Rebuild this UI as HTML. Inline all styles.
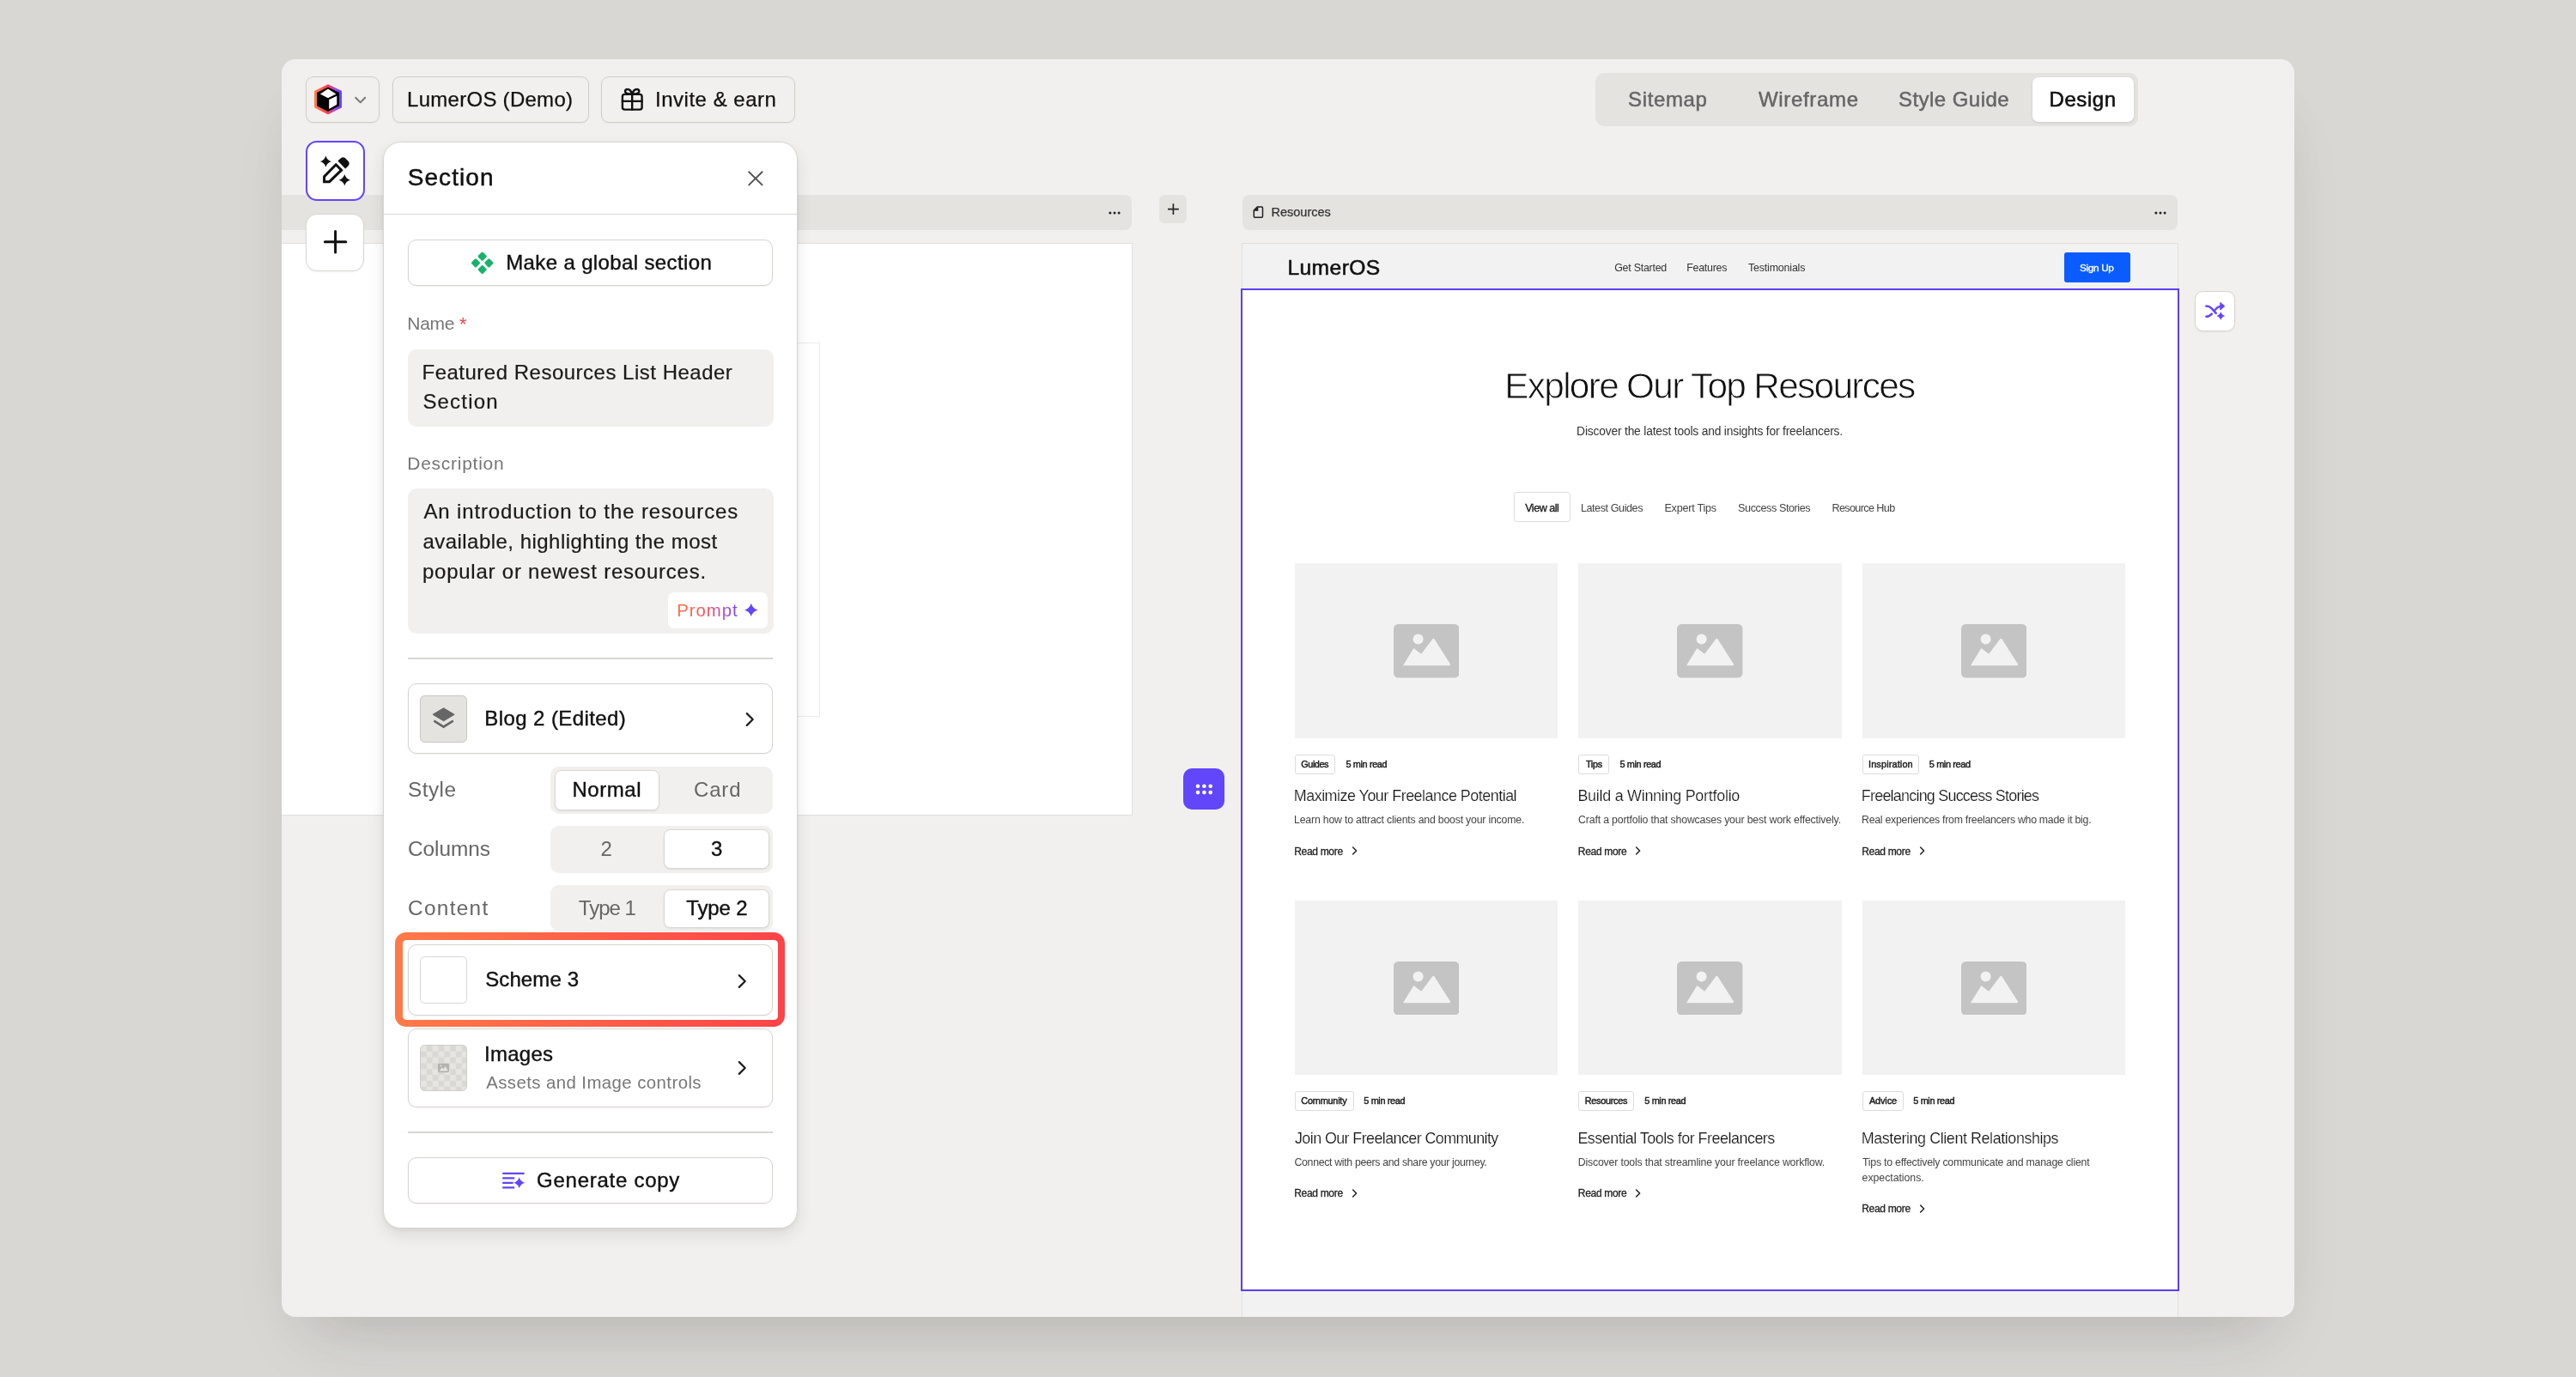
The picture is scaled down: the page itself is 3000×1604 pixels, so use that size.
<!DOCTYPE html>
<html lang="en">
<head>
<meta charset="utf-8">
<title>Section settings</title>
<style>
*{box-sizing:border-box;margin:0;padding:0}
html,body{width:3000px;height:1604px;overflow:hidden}
body{background:#d8d7d4;font-family:"Liberation Sans",sans-serif;color:#111;position:relative}
.abs{position:absolute}
.t{position:absolute;white-space:pre;line-height:1}
#shadow{position:absolute;left:328px;top:69px;width:2344px;height:1465px;border-radius:16px;background:#f1f0ee;box-shadow:0 50px 90px -34px rgba(55,50,45,.11),0 30px 60px -30px rgba(30,25,20,.12)}
#clip{will-change:transform;position:absolute;left:0;top:0;width:3000px;height:1604px;clip-path:inset(69px 328px 70px 328px round 16px)}
.btn{position:absolute;border:1px solid #cfcdc8;border-radius:9px;background:#f1f0ee;box-shadow:0 1px 2px rgba(0,0,0,.05)}
.bar{position:absolute;background:#e4e3e0}
.tag{position:absolute;border:1px solid #dcdcdc;border-radius:3px;background:#fff}
.img{position:absolute;background:#f2f2f2}
.row{position:absolute;background:#fff;border:1px solid #d5d3cf;border-radius:10px;box-shadow:0 1px 2px rgba(0,0,0,.05)}
.fld{position:absolute;background:#f1f0ee;border-radius:10px}
.seg{position:absolute;background:#f1f0ee;border-radius:10px}
.sel{position:absolute;background:#fff;border:1px solid #d9d7d3;border-radius:7.5px;box-shadow:0 1px 2px rgba(0,0,0,.08)}
.hr{position:absolute;height:1.5px;background:#d9d7d4}
</style>
</head>
<body>
<div id="shadow"></div>
<div id="clip">
<div class="btn" style="left:356px;top:89px;width:86px;height:54px;"></div>
<svg class="abs" style="left:364px;top:97px;" width="36" height="38" viewBox="364 97 36 38"><defs><linearGradient id="lg" x1="0" y1="0" x2="1" y2="0"><stop offset="0" stop-color="#ff7d45"/><stop offset=".48" stop-color="#ff3b4e"/><stop offset=".78" stop-color="#a24bd8"/><stop offset="1" stop-color="#6344ff"/></linearGradient></defs>
<path d="M382.05 99.9 396.5 106.9v17.5L382.05 131.7 367.6 124.4v-17.5z" fill="#000" stroke="url(#lg)" stroke-width="3.1" stroke-linejoin="round"/>
<path d="M382 103.6 391.4 109.5 382 114.3 372.9 109.5z" fill="#fff"/><path d="M383.2 116.1 392.3 111.7v10L383.2 127z" fill="#fff"/></svg>
<svg class="abs" style="left:410px;top:110px;" width="20" height="14" viewBox="410 110 20 14"><path d="M414.2 113.8 419.7 119.4 425.2 113.8" fill="none" stroke="#777" stroke-width="2" stroke-linecap="round" stroke-linejoin="round"/></svg>
<div class="btn" style="left:456.5px;top:89px;width:229px;height:54px;"></div>
<div class="t" style="left:474px;top:104px;font-size:24px;letter-spacing:0.28px;-webkit-text-stroke:0.25px #111;">LumerOS (Demo)</div>
<div class="btn" style="left:700px;top:89px;width:225.5px;height:54px;"></div>
<svg class="abs" style="left:720px;top:100px;" width="32" height="32" viewBox="720 100 32 32"><g fill="none" stroke="#111" stroke-width="2.4" stroke-linejoin="round" stroke-linecap="round"><rect x="724.9" y="109.9" width="22.7" height="17.7" rx="2.6"/><path d="M736.2 109.9v17.7M724.9 117.9h22.7"/><path d="M736.2 109.6c-1.2-3.6-3-5.6-5.2-5.6-1.8 0-3 1.2-3 2.6 0 2 2.6 3 8.2 3zM736.2 109.6c1.2-3.6 3-5.6 5.2-5.6 1.8 0 3 1.2 3 2.6 0 2-2.6 3-8.2 3z"/></g></svg>
<div class="t" style="left:763.1px;top:104px;font-size:24px;letter-spacing:0.5px;-webkit-text-stroke:0.25px #111;">Invite &amp; earn</div>
<div class="abs" style="left:1858px;top:85px;width:632px;height:62px;background:#e4e3e0;border-radius:10px"></div>
<div class="abs" style="left:2367px;top:90px;width:118px;height:52px;background:#fff;border-radius:7px;box-shadow:0 1px 3px rgba(0,0,0,.12)"></div>
<div class="t" style="left:1896px;top:104px;font-size:24px;color:#666;letter-spacing:0.65px;-webkit-text-stroke:0.5px #666;">Sitemap</div>
<div class="t" style="left:2047.9px;top:104px;font-size:24px;color:#666;letter-spacing:0.69px;-webkit-text-stroke:0.5px #666;">Wireframe</div>
<div class="t" style="left:2211px;top:104px;font-size:24px;color:#666;letter-spacing:0.45px;-webkit-text-stroke:0.5px #666;">Style Guide</div>
<div class="t" style="left:2386.6px;top:104px;font-size:24px;letter-spacing:0.54px;-webkit-text-stroke:0.6px #111;">Design</div>
<div class="bar" style="left:300px;top:227px;width:1018px;height:41px;border-radius:0 8px 8px 0"></div>
<svg class="abs" style="left:1290px;top:244.6px;" width="16" height="6" viewBox="-8 -3 16 6"><circle cx="-5.1" cy="0" r="1.5" fill="#222"/><circle cx="0" cy="0" r="1.5" fill="#222"/><circle cx="5.1" cy="0" r="1.5" fill="#222"/></svg>
<div class="abs" style="left:300px;top:282.75px;width:1018.75px;height:666.75px;background:#fff;border:1px solid #e1e0de"></div>
<div class="abs" style="left:700px;top:398.5px;width:255px;height:436px;border:1px solid #ebebeb;background:#fff"></div>
<div class="bar" style="left:1350.25px;top:227.25px;width:32px;height:32.5px;border-radius:6px"></div>
<svg class="abs" style="left:1358px;top:235px;" width="17" height="17" viewBox="1358 235 17 17"><path d="M1366.4 237.2v12.8M1360 243.6h12.8" stroke="#222" stroke-width="1.6" fill="none"/></svg>
<div class="bar" style="left:1447px;top:227px;width:1089px;height:41px;border-radius:8px"></div>
<svg class="abs" style="left:1457px;top:238px;" width="17" height="18" viewBox="1457 238 17 18"><path d="M1464.2 241h5.1a1.2 1.2 0 0 1 1.2 1.2v9.8a1.2 1.2 0 0 1-1.2 1.2h-7.8a1.2 1.2 0 0 1-1.2-1.2v-7z" fill="none" stroke="#222" stroke-width="1.5" stroke-linejoin="round"/><path d="M1465.3 240.3v5.4h-5.6z" fill="#222"/></svg>
<div class="t" style="left:1480.5px;top:240px;font-size:14.5px;color:#333;-webkit-text-stroke:0.25px #333;">Resources</div>
<svg class="abs" style="left:2507.5px;top:244.6px;" width="16" height="6" viewBox="-8 -3 16 6"><circle cx="-5.1" cy="0" r="1.5" fill="#222"/><circle cx="0" cy="0" r="1.5" fill="#222"/><circle cx="5.1" cy="0" r="1.5" fill="#222"/></svg>
<div class="abs" style="left:1446px;top:282.75px;width:1091px;height:1277.25px;background:#f2f2f2;border:1px solid #dfdfdf"></div>
<div class="t" style="left:1499.4px;top:300px;font-size:24.6px;letter-spacing:0.43px;-webkit-text-stroke:0.55px #111;">LumerOS</div>
<div class="t" style="left:1880.2px;top:306px;font-size:12.4px;color:#333;letter-spacing:-0.23px;">Get Started</div>
<div class="t" style="left:1964.2px;top:306px;font-size:12.4px;color:#333;letter-spacing:-0.24px;">Features</div>
<div class="t" style="left:2036px;top:306px;font-size:12.4px;color:#333;letter-spacing:-0.16px;">Testimonials</div>
<div class="abs" style="left:2403.5px;top:294px;width:77.5px;height:34.5px;background:#0b5cff;border-radius:3px"></div>
<div class="t" style="left:2422.1px;top:307px;font-size:11.8px;color:#fff;letter-spacing:-0.37px;-webkit-text-stroke:0.3px #fff;">Sign Up</div>
<div class="abs" style="left:1445.2px;top:335.7px;width:1092.8px;height:1167.9px;background:#fff;border:2.2px solid #5b3ef7"></div>
<div class="t" style="left:1752.2px;top:429px;font-size:42.4px;letter-spacing:-1.7px;-webkit-text-stroke:0.8px #fff;">Explore Our Top Resources</div>
<div class="t" style="left:1836.1px;top:496px;font-size:13.8px;color:#333;letter-spacing:-0.18px;">Discover the latest tools and insights for freelancers.</div>
<div class="tag" style="left:1762.5px;top:572.5px;width:66px;height:35px;border-radius:3.5px"></div>
<div class="t" style="left:1776.2px;top:586px;font-size:12.6px;color:#222;letter-spacing:-0.51px;-webkit-text-stroke:0.35px #222;">View all</div>
<div class="t" style="left:1840.9px;top:586px;font-size:12.6px;color:#444;letter-spacing:-0.43px;">Latest Guides</div>
<div class="t" style="left:1938.4px;top:586px;font-size:12.6px;color:#444;letter-spacing:-0.23px;">Expert Tips</div>
<div class="t" style="left:2024.1px;top:586px;font-size:12.6px;color:#444;letter-spacing:-0.41px;">Success Stories</div>
<div class="t" style="left:2133.4px;top:586px;font-size:12.6px;color:#444;letter-spacing:-0.61px;">Resource Hub</div>
<div class="img" style="left:1507.6px;top:655.75px;width:306.4px;height:204.25px;"></div>
<svg class="abs" style="left:1622.6px;top:727.08px;" width="76.4" height="62.6" viewBox="0 0 76.4 62.6"><rect x="0" y="0" width="76.4" height="62.6" rx="5.4" fill="#c4c4c4"/><circle cx="28.6" cy="17.6" r="6" fill="#f2f2f2"/><path d="M11 48.2 22.6 29.2a1.4 1.4 0 0 1 2.3 0L32.2 34.8 45.2 17.6a1.4 1.4 0 0 1 2.3 0L66 46.4a1.2 1.2 0 0 1-1 1.8z" fill="#f2f2f2"/></svg>
<div class="tag" style="left:1507.6px;top:878.5px;width:47.9px;height:23px;"></div>
<div class="t" style="left:1515.3px;top:885px;font-size:10.9px;color:#1c1c1c;letter-spacing:-0.46px;-webkit-text-stroke:0.45px #1c1c1c;">Guides</div>
<div class="t" style="left:1567.4px;top:885px;font-size:10.9px;color:#1c1c1c;letter-spacing:-0.36px;-webkit-text-stroke:0.45px #1c1c1c;">5 min read</div>
<div class="t" style="left:1506.8px;top:919px;font-size:17.9px;color:#161616;letter-spacing:-0.49px;-webkit-text-stroke:0.18px #fff;">Maximize Your Freelance Potential</div>
<div class="t" style="left:1507.1px;top:949px;font-size:12.3px;color:#444;letter-spacing:-0.2px;">Learn how to attract clients and boost your income.</div>
<div class="t" style="left:1507.2px;top:986px;font-size:12px;color:#222;letter-spacing:-0.31px;-webkit-text-stroke:0.3px #222;">Read more</div>
<svg class="abs" style="left:1572.8px;top:985.35px;" width="10" height="12" viewBox="-2 -6 10 12"><path d="M0.6 -4 4.6 0 0.6 4" fill="none" stroke="#222" stroke-width="1.5" stroke-linecap="round" stroke-linejoin="round"/></svg>
<div class="img" style="left:1838.2px;top:655.75px;width:306.4px;height:204.25px;"></div>
<svg class="abs" style="left:1953.2px;top:727.08px;" width="76.4" height="62.6" viewBox="0 0 76.4 62.6"><rect x="0" y="0" width="76.4" height="62.6" rx="5.4" fill="#c4c4c4"/><circle cx="28.6" cy="17.6" r="6" fill="#f2f2f2"/><path d="M11 48.2 22.6 29.2a1.4 1.4 0 0 1 2.3 0L32.2 34.8 45.2 17.6a1.4 1.4 0 0 1 2.3 0L66 46.4a1.2 1.2 0 0 1-1 1.8z" fill="#f2f2f2"/></svg>
<div class="tag" style="left:1838.2px;top:878.5px;width:36.3px;height:23px;"></div>
<div class="t" style="left:1846.9px;top:885px;font-size:10.9px;color:#1c1c1c;letter-spacing:-0.33px;-webkit-text-stroke:0.45px #1c1c1c;">Tips</div>
<div class="t" style="left:1886.4px;top:885px;font-size:10.9px;color:#1c1c1c;letter-spacing:-0.36px;-webkit-text-stroke:0.45px #1c1c1c;">5 min read</div>
<div class="t" style="left:1837.4px;top:919px;font-size:17.9px;color:#161616;letter-spacing:-0.25px;-webkit-text-stroke:0.18px #fff;">Build a Winning Portfolio</div>
<div class="t" style="left:1838.1px;top:949px;font-size:12.3px;color:#444;letter-spacing:-0.17px;">Craft a portfolio that showcases your best work effectively.</div>
<div class="t" style="left:1837.8px;top:986px;font-size:12px;color:#222;letter-spacing:-0.31px;-webkit-text-stroke:0.3px #222;">Read more</div>
<svg class="abs" style="left:1903.4px;top:985.35px;" width="10" height="12" viewBox="-2 -6 10 12"><path d="M0.6 -4 4.6 0 0.6 4" fill="none" stroke="#222" stroke-width="1.5" stroke-linecap="round" stroke-linejoin="round"/></svg>
<div class="img" style="left:2168.6px;top:655.75px;width:306.4px;height:204.25px;"></div>
<svg class="abs" style="left:2283.6px;top:727.08px;" width="76.4" height="62.6" viewBox="0 0 76.4 62.6"><rect x="0" y="0" width="76.4" height="62.6" rx="5.4" fill="#c4c4c4"/><circle cx="28.6" cy="17.6" r="6" fill="#f2f2f2"/><path d="M11 48.2 22.6 29.2a1.4 1.4 0 0 1 2.3 0L32.2 34.8 45.2 17.6a1.4 1.4 0 0 1 2.3 0L66 46.4a1.2 1.2 0 0 1-1 1.8z" fill="#f2f2f2"/></svg>
<div class="tag" style="left:2168.6px;top:878.5px;width:66.9px;height:23px;"></div>
<div class="t" style="left:2176px;top:885px;font-size:10.9px;color:#1c1c1c;letter-spacing:0.14px;-webkit-text-stroke:0.45px #1c1c1c;">Inspiration</div>
<div class="t" style="left:2246.8px;top:885px;font-size:10.9px;color:#1c1c1c;letter-spacing:-0.36px;-webkit-text-stroke:0.45px #1c1c1c;">5 min read</div>
<div class="t" style="left:2167.8px;top:919px;font-size:17.9px;color:#161616;letter-spacing:-0.75px;-webkit-text-stroke:0.18px #fff;">Freelancing Success Stories</div>
<div class="t" style="left:2168.1px;top:949px;font-size:12.3px;color:#444;letter-spacing:-0.26px;">Real experiences from freelancers who made it big.</div>
<div class="t" style="left:2168.2px;top:986px;font-size:12px;color:#222;letter-spacing:-0.31px;-webkit-text-stroke:0.3px #222;">Read more</div>
<svg class="abs" style="left:2233.8px;top:985.35px;" width="10" height="12" viewBox="-2 -6 10 12"><path d="M0.6 -4 4.6 0 0.6 4" fill="none" stroke="#222" stroke-width="1.5" stroke-linecap="round" stroke-linejoin="round"/></svg>
<div class="img" style="left:1507.6px;top:1048.6px;width:306.4px;height:203.7px;"></div>
<svg class="abs" style="left:1622.6px;top:1119.65px;" width="76.4" height="62.6" viewBox="0 0 76.4 62.6"><rect x="0" y="0" width="76.4" height="62.6" rx="5.4" fill="#c4c4c4"/><circle cx="28.6" cy="17.6" r="6" fill="#f2f2f2"/><path d="M11 48.2 22.6 29.2a1.4 1.4 0 0 1 2.3 0L32.2 34.8 45.2 17.6a1.4 1.4 0 0 1 2.3 0L66 46.4a1.2 1.2 0 0 1-1 1.8z" fill="#f2f2f2"/></svg>
<div class="tag" style="left:1507.6px;top:1271px;width:69.4px;height:22.6px;"></div>
<div class="t" style="left:1515.3px;top:1277px;font-size:10.9px;color:#1c1c1c;letter-spacing:-0.22px;-webkit-text-stroke:0.45px #1c1c1c;">Community</div>
<div class="t" style="left:1588.3px;top:1277px;font-size:10.9px;color:#1c1c1c;letter-spacing:-0.36px;-webkit-text-stroke:0.45px #1c1c1c;">5 min read</div>
<div class="t" style="left:1508px;top:1318px;font-size:17.9px;color:#161616;letter-spacing:-0.58px;-webkit-text-stroke:0.18px #fff;">Join Our Freelancer Community</div>
<div class="t" style="left:1507.5px;top:1348px;font-size:12.3px;color:#444;letter-spacing:-0.31px;">Connect with peers and share your journey.</div>
<div class="t" style="left:1507.2px;top:1384px;font-size:12px;color:#222;letter-spacing:-0.31px;-webkit-text-stroke:0.3px #222;">Read more</div>
<svg class="abs" style="left:1572.8px;top:1383.85px;" width="10" height="12" viewBox="-2 -6 10 12"><path d="M0.6 -4 4.6 0 0.6 4" fill="none" stroke="#222" stroke-width="1.5" stroke-linecap="round" stroke-linejoin="round"/></svg>
<div class="img" style="left:1838.2px;top:1048.6px;width:306.4px;height:203.7px;"></div>
<svg class="abs" style="left:1953.2px;top:1119.65px;" width="76.4" height="62.6" viewBox="0 0 76.4 62.6"><rect x="0" y="0" width="76.4" height="62.6" rx="5.4" fill="#c4c4c4"/><circle cx="28.6" cy="17.6" r="6" fill="#f2f2f2"/><path d="M11 48.2 22.6 29.2a1.4 1.4 0 0 1 2.3 0L32.2 34.8 45.2 17.6a1.4 1.4 0 0 1 2.3 0L66 46.4a1.2 1.2 0 0 1-1 1.8z" fill="#f2f2f2"/></svg>
<div class="tag" style="left:1838.2px;top:1271px;width:65.3px;height:22.6px;"></div>
<div class="t" style="left:1845.8px;top:1277px;font-size:10.9px;color:#1c1c1c;letter-spacing:-0.3px;-webkit-text-stroke:0.45px #1c1c1c;">Resources</div>
<div class="t" style="left:1915.3px;top:1277px;font-size:10.9px;color:#1c1c1c;letter-spacing:-0.36px;-webkit-text-stroke:0.45px #1c1c1c;">5 min read</div>
<div class="t" style="left:1837.4px;top:1318px;font-size:17.9px;color:#161616;letter-spacing:-0.48px;-webkit-text-stroke:0.18px #fff;">Essential Tools for Freelancers</div>
<div class="t" style="left:1837.7px;top:1348px;font-size:12.3px;color:#444;letter-spacing:-0.17px;">Discover tools that streamline your freelance workflow.</div>
<div class="t" style="left:1837.8px;top:1384px;font-size:12px;color:#222;letter-spacing:-0.31px;-webkit-text-stroke:0.3px #222;">Read more</div>
<svg class="abs" style="left:1903.4px;top:1383.85px;" width="10" height="12" viewBox="-2 -6 10 12"><path d="M0.6 -4 4.6 0 0.6 4" fill="none" stroke="#222" stroke-width="1.5" stroke-linecap="round" stroke-linejoin="round"/></svg>
<div class="img" style="left:2168.6px;top:1048.6px;width:306.4px;height:203.7px;"></div>
<svg class="abs" style="left:2283.6px;top:1119.65px;" width="76.4" height="62.6" viewBox="0 0 76.4 62.6"><rect x="0" y="0" width="76.4" height="62.6" rx="5.4" fill="#c4c4c4"/><circle cx="28.6" cy="17.6" r="6" fill="#f2f2f2"/><path d="M11 48.2 22.6 29.2a1.4 1.4 0 0 1 2.3 0L32.2 34.8 45.2 17.6a1.4 1.4 0 0 1 2.3 0L66 46.4a1.2 1.2 0 0 1-1 1.8z" fill="#f2f2f2"/></svg>
<div class="tag" style="left:2168.6px;top:1271px;width:48.4px;height:22.6px;"></div>
<div class="t" style="left:2177px;top:1277px;font-size:10.9px;color:#1c1c1c;letter-spacing:-0.14px;-webkit-text-stroke:0.45px #1c1c1c;">Advice</div>
<div class="t" style="left:2228.3px;top:1277px;font-size:10.9px;color:#1c1c1c;letter-spacing:-0.36px;-webkit-text-stroke:0.45px #1c1c1c;">5 min read</div>
<div class="t" style="left:2167.8px;top:1318px;font-size:17.9px;color:#161616;letter-spacing:-0.41px;-webkit-text-stroke:0.18px #fff;">Mastering Client Relationships</div>
<div class="t" style="left:2168.9px;top:1348px;font-size:12.3px;color:#444;letter-spacing:-0.21px;">Tips to effectively communicate and manage client</div>
<div class="t" style="left:2168.6px;top:1366px;font-size:12.3px;color:#444;letter-spacing:-0.03px;">expectations.</div>
<div class="t" style="left:2168.2px;top:1402px;font-size:12px;color:#222;letter-spacing:-0.31px;-webkit-text-stroke:0.3px #222;">Read more</div>
<svg class="abs" style="left:2233.8px;top:1401.85px;" width="10" height="12" viewBox="-2 -6 10 12"><path d="M0.6 -4 4.6 0 0.6 4" fill="none" stroke="#222" stroke-width="1.5" stroke-linecap="round" stroke-linejoin="round"/></svg>
<div class="abs" style="left:356px;top:164px;width:69px;height:69.75px;background:#fff;border:2.8px solid #6246fa;border-radius:13px"></div>
<svg class="abs" style="left:370px;top:178px;" width="42" height="42" viewBox="370 178 42 42"><g fill="#111"><path d="M379.40 181.50Q380.85 186.65 386.00 188.10Q380.85 189.55 379.40 194.70Q377.95 189.55 372.80 188.10Q377.95 186.65 379.40 181.50Z"/><path d="M401.30 203.10Q402.75 208.25 407.90 209.70Q402.75 211.15 401.30 216.30Q399.85 211.15 394.70 209.70Q399.85 208.25 401.30 203.10Z"/></g><path d="M391.2 191.8 397.6 198.2 383.6 211.7H377.6V205.6Z" fill="none" stroke="#111" stroke-width="3" stroke-linejoin="miter"/><path d="M393.4 187.6 396.6 184.6a4.2 4.2 0 0 1 5.8 0l3 3a4.2 4.2 0 0 1 0 5.8l-3.2 3.2z" fill="#111"/></svg>
<div class="abs" style="left:356.4px;top:248.5px;width:68px;height:67.2px;background:#fff;border:1px solid #d8d6d2;border-radius:13px;box-shadow:0 1px 2px rgba(0,0,0,.05)"></div>
<svg class="abs" style="left:374px;top:265px;" width="34" height="34" viewBox="374 265 34 34"><path d="M390.6 269.5v24.4M378.4 281.7h24.4" stroke="#111" stroke-width="3" stroke-linecap="round" fill="none"/></svg>
<div class="abs" style="left:2556px;top:338.6px;width:47.3px;height:47.3px;background:#fff;border:1px solid #d6d5d2;border-radius:9.5px;box-shadow:0 1px 2px rgba(0,0,0,.06)"></div>
<svg class="abs" style="left:2564px;top:348px;" width="32" height="28" viewBox="2564 348 32 28"><g fill="none" stroke="#6246fa" stroke-width="2.5" stroke-linecap="round" stroke-linejoin="round"><path d="M2569.4 356.6c3.2 0 4.6 1 6.4 2.8l5 5.4"/><path d="M2569.4 368.8c2.8 0 4.6-1.2 6.4-3.2"/><path d="M2578.6 362.2c2.6-3.4 4.8-5.4 8-5.5"/></g><path d="M2585.8 352.4 2590.8 356.7 2585.8 361z" fill="#6246fa" stroke="#6246fa" stroke-width="1" stroke-linejoin="round"/><g fill="#6246fa"><path d="M2586.30 363.10Q2587.40 367.00 2591.30 368.10Q2587.40 369.20 2586.30 373.10Q2585.20 369.20 2581.30 368.10Q2585.20 367.00 2586.30 363.10Z"/></g></svg>
<div class="abs" style="left:1378.2px;top:894.9px;width:48.3px;height:48.6px;background:#6246fa;border-radius:10px"></div>
<svg class="abs" style="left:1390px;top:910px;" width="25" height="19" viewBox="1390 910 25 19"><circle cx="1395" cy="915.8" r="2.3" fill="#fff"/><circle cx="1395" cy="923.1" r="2.3" fill="#fff"/><circle cx="1402.4" cy="915.8" r="2.3" fill="#fff"/><circle cx="1402.4" cy="923.1" r="2.3" fill="#fff"/><circle cx="1409.7" cy="915.8" r="2.3" fill="#fff"/><circle cx="1409.7" cy="923.1" r="2.3" fill="#fff"/></svg>
<div class="abs" style="left:446.4px;top:165.4px;width:482.8px;height:1265.6px;background:#fff;border:1px solid #d6d4d0;border-radius:20.5px;box-shadow:0 8px 18px rgba(40,35,25,.10),0 2px 5px rgba(40,35,25,.06)"></div>
<div class="t" style="left:474.7px;top:193px;font-size:28px;letter-spacing:1.08px;-webkit-text-stroke:0.5px #111;">Section</div>
<svg class="abs" style="left:868px;top:196px;" width="24" height="24" viewBox="868 196 24 24"><path d="M872.2 200.2 887.6 215.4M887.6 200.2 872.2 215.4" stroke="#555" stroke-width="2" stroke-linecap="round" fill="none"/></svg>
<div class="hr" style="left:447.4px;top:248.7px;width:480.8px;height:1.4px;"></div>
<div class="row" style="left:475px;top:279.3px;width:425.4px;height:53.7px;"></div>
<svg class="abs" style="left:546px;top:291px;" width="32" height="31" viewBox="546 291 32 31"><g fill="#18b368"><rect x="557.70" y="294.60" width="8" height="8" rx="1.5" transform="rotate(45 561.70 298.60)"/><rect x="557.70" y="310.00" width="8" height="8" rx="1.5" transform="rotate(45 561.70 314.00)"/><rect x="550.00" y="302.30" width="8" height="8" rx="1.5" transform="rotate(45 554.00 306.30)"/><rect x="565.40" y="302.30" width="8" height="8" rx="1.5" transform="rotate(45 569.40 306.30)"/></g></svg>
<div class="t" style="left:589.2px;top:294px;font-size:24px;letter-spacing:0.37px;-webkit-text-stroke:0.4px #111;">Make a global section</div>
<div class="t" style="left:474.3px;top:366px;font-size:21px;color:#757575;letter-spacing:-0.27px;">Name</div>
<div class="t" style="left:534.9px;top:367px;font-size:21.8px;color:#f2464b;">*</div>
<div class="fld" style="left:475px;top:406.5px;width:425.5px;height:90px;"></div>
<div class="t" style="left:491.5px;top:422px;font-size:24px;color:#1a1a1a;letter-spacing:0.5px;-webkit-text-stroke:0.2px #1a1a1a;">Featured Resources List Header</div>
<div class="t" style="left:492.4px;top:456px;font-size:24px;color:#1a1a1a;letter-spacing:1.18px;-webkit-text-stroke:0.2px #1a1a1a;">Section</div>
<div class="t" style="left:474.3px;top:529px;font-size:21px;color:#757575;letter-spacing:0.73px;">Description</div>
<div class="fld" style="left:475px;top:569px;width:425.5px;height:169.4px;"></div>
<div class="t" style="left:493.4px;top:584px;font-size:24px;color:#1a1a1a;letter-spacing:0.87px;-webkit-text-stroke:0.2px #1a1a1a;">An introduction to the resources</div>
<div class="t" style="left:492.4px;top:619px;font-size:24px;color:#1a1a1a;letter-spacing:0.47px;-webkit-text-stroke:0.2px #1a1a1a;">available, highlighting the most</div>
<div class="t" style="left:491.9px;top:654px;font-size:24px;color:#1a1a1a;letter-spacing:0.77px;-webkit-text-stroke:0.2px #1a1a1a;">popular or newest resources.</div>
<div class="abs" style="left:778.3px;top:690.2px;width:115.6px;height:41.6px;background:#fff;border-radius:7px"></div>
<div class="t" style="left:788.3px;top:701px;font-size:20.4px;color:#ff5a4a;letter-spacing:0.92px;background:linear-gradient(90deg,#ff7043 0%,#ff4d55 48%,#b44bd0 78%,#6a45f5 100%);-webkit-background-clip:text;background-clip:text;-webkit-text-fill-color:transparent;padding-bottom:6px;">Prompt</div>
<svg class="abs" style="left:866px;top:702px;" width="18" height="18" viewBox="866 702 18 18"><g fill="#6246fa"><path d="M874.80 702.70Q876.52 708.78 882.60 710.50Q876.52 712.22 874.80 718.30Q873.08 712.22 867.00 710.50Q873.08 708.78 874.80 702.70Z"/></g></svg>
<div class="hr" style="left:475px;top:766.4px;width:425.4px;height:1.4px;"></div>
<div class="row" style="left:475px;top:796px;width:425.4px;height:82.2px;"></div>
<div class="abs" style="left:489.1px;top:809.8px;width:54.8px;height:54.8px;background:#e4e3e0;border:1px solid #c8c6c2;border-radius:5.5px"></div>
<svg class="abs" style="left:502px;top:822px;" width="29" height="30" viewBox="502 822 29 30"><path d="M516.6 824.8 529.2 832.3 516.6 839.8 504 832.3z" fill="#666" stroke="#666" stroke-width="1" stroke-linejoin="round"/><path d="M505.4 839.6 516.6 846.6 527.8 839.6" fill="none" stroke="#666" stroke-width="2.6" stroke-linejoin="miter"/></svg>
<div class="t" style="left:564.3px;top:825px;font-size:24px;letter-spacing:0.41px;-webkit-text-stroke:0.4px #111;">Blog 2 (Edited)</div>
<svg class="abs" style="left:865.4px;top:827px;" width="16" height="22" viewBox="-8 -11 16 22"><path d="M-3.2 -6.9 3.7 0 -3.2 6.9" fill="none" stroke="#1c1c1c" stroke-width="2.2" stroke-linecap="round" stroke-linejoin="round"/></svg>
<div class="t" style="left:475.1px;top:908px;font-size:24.4px;color:#666;letter-spacing:0.43px;">Style</div>
<div class="seg" style="left:641.3px;top:893px;width:258.9px;height:54.8px;"></div>
<div class="sel" style="left:645.6px;top:897.2px;width:122.6px;height:46.4px;"></div>
<div class="t" style="left:666.4px;top:908px;font-size:24px;letter-spacing:0.58px;-webkit-text-stroke:0.4px #111;">Normal</div>
<div class="t" style="left:808px;top:908px;font-size:24px;color:#666;letter-spacing:0.83px;">Card</div>
<div class="t" style="left:475px;top:977px;font-size:24.4px;color:#666;letter-spacing:-0.03px;">Columns</div>
<div class="seg" style="left:641.3px;top:962.2px;width:258.9px;height:54.4px;"></div>
<div class="sel" style="left:773.4px;top:966.4px;width:122.6px;height:46px;"></div>
<div class="t" style="left:699.6px;top:977px;font-size:24px;color:#666;">2</div>
<div class="t" style="left:828px;top:977px;font-size:24px;-webkit-text-stroke:0.4px #111;">3</div>
<div class="t" style="left:475px;top:1046px;font-size:24.4px;color:#666;letter-spacing:1.3px;">Content</div>
<div class="seg" style="left:641.3px;top:1031.3px;width:258.9px;height:54px;"></div>
<div class="sel" style="left:773.4px;top:1035.5px;width:122.6px;height:45.6px;"></div>
<div class="t" style="left:673.8px;top:1046px;font-size:24px;color:#666;letter-spacing:-1px;">Type 1</div>
<div class="t" style="left:799.3px;top:1046px;font-size:24px;letter-spacing:-0.14px;-webkit-text-stroke:0.4px #111;">Type 2</div>
<div class="abs" style="left:460.2px;top:1086.1px;width:454px;height:110.4px;border-radius:13px;background:linear-gradient(90deg,#ff7a48,#fb4348)"></div>
<div class="abs" style="left:468.6px;top:1094.5px;width:437.2px;height:93.6px;border-radius:4.5px;background:#fff"></div>
<div class="row" style="left:475px;top:1100.4px;width:425.4px;height:82.2px;"></div>
<div class="abs" style="left:489.1px;top:1114.4px;width:54.6px;height:54.6px;background:#fff;border:1px solid #d9d7d4;border-radius:5.5px"></div>
<div class="t" style="left:565.2px;top:1129px;font-size:24px;letter-spacing:0.11px;-webkit-text-stroke:0.4px #111;">Scheme 3</div>
<svg class="abs" style="left:855.8px;top:1131.5px;" width="16" height="22" viewBox="-8 -11 16 22"><path d="M-3.2 -6.9 3.7 0 -3.2 6.9" fill="none" stroke="#1c1c1c" stroke-width="2.2" stroke-linecap="round" stroke-linejoin="round"/></svg>
<div class="row" style="left:475px;top:1197.8px;width:425.4px;height:91.9px;"></div>
<div class="abs" style="left:489.1px;top:1216.5px;width:54.6px;height:54.6px;border:1px solid #cfcdc9;border-radius:5.5px;background-color:#e6e5e2;background-image:conic-gradient(#d9d8d4 25%,transparent 0 50%,#d9d8d4 0 75%,transparent 0);background-size:13.65px 13.65px"></div>
<svg class="abs" style="left:509px;top:1238px;" width="15" height="12" viewBox="509 1238 15 12"><rect x="510" y="1238.8" width="13" height="10.4" rx="1.4" fill="#b4b2af"/><path d="M511.6 1247.4 514.6 1243.4 516.4 1245.2 518.8 1242 521.6 1247.4z" fill="#e6e5e2"/><circle cx="513.6" cy="1241.6" r="1" fill="#e6e5e2"/></svg>
<div class="t" style="left:564.1px;top:1216px;font-size:24px;letter-spacing:0.24px;-webkit-text-stroke:0.4px #111;">Images</div>
<div class="t" style="left:566.2px;top:1251px;font-size:20.4px;color:#777;letter-spacing:0.42px;">Assets and Image controls</div>
<svg class="abs" style="left:855.8px;top:1233.4px;" width="16" height="22" viewBox="-8 -11 16 22"><path d="M-3.2 -6.9 3.7 0 -3.2 6.9" fill="none" stroke="#1c1c1c" stroke-width="2.2" stroke-linecap="round" stroke-linejoin="round"/></svg>
<div class="hr" style="left:475px;top:1318.2px;width:425.4px;height:1.4px;"></div>
<div class="row" style="left:475px;top:1348.1px;width:425.4px;height:54.4px;"></div>
<svg class="abs" style="left:583px;top:1363px;" width="30" height="25" viewBox="583 1363 30 25"><g fill="none" stroke="#6246fa" stroke-width="2.3"><path d="M585.2 1366.9h25.4M585.2 1372.4h14M585.2 1377.9h12.4M585.2 1383.4h14"/></g><g fill="#6246fa"><path d="M604.70 1371.30Q606.11 1376.29 611.10 1377.70Q606.11 1379.11 604.70 1384.10Q603.29 1379.11 598.30 1377.70Q603.29 1376.29 604.70 1371.30Z"/></g></svg>
<div class="t" style="left:625.1px;top:1363px;font-size:24px;letter-spacing:0.73px;-webkit-text-stroke:0.4px #111;">Generate copy</div>
</div>
</body>
</html>
